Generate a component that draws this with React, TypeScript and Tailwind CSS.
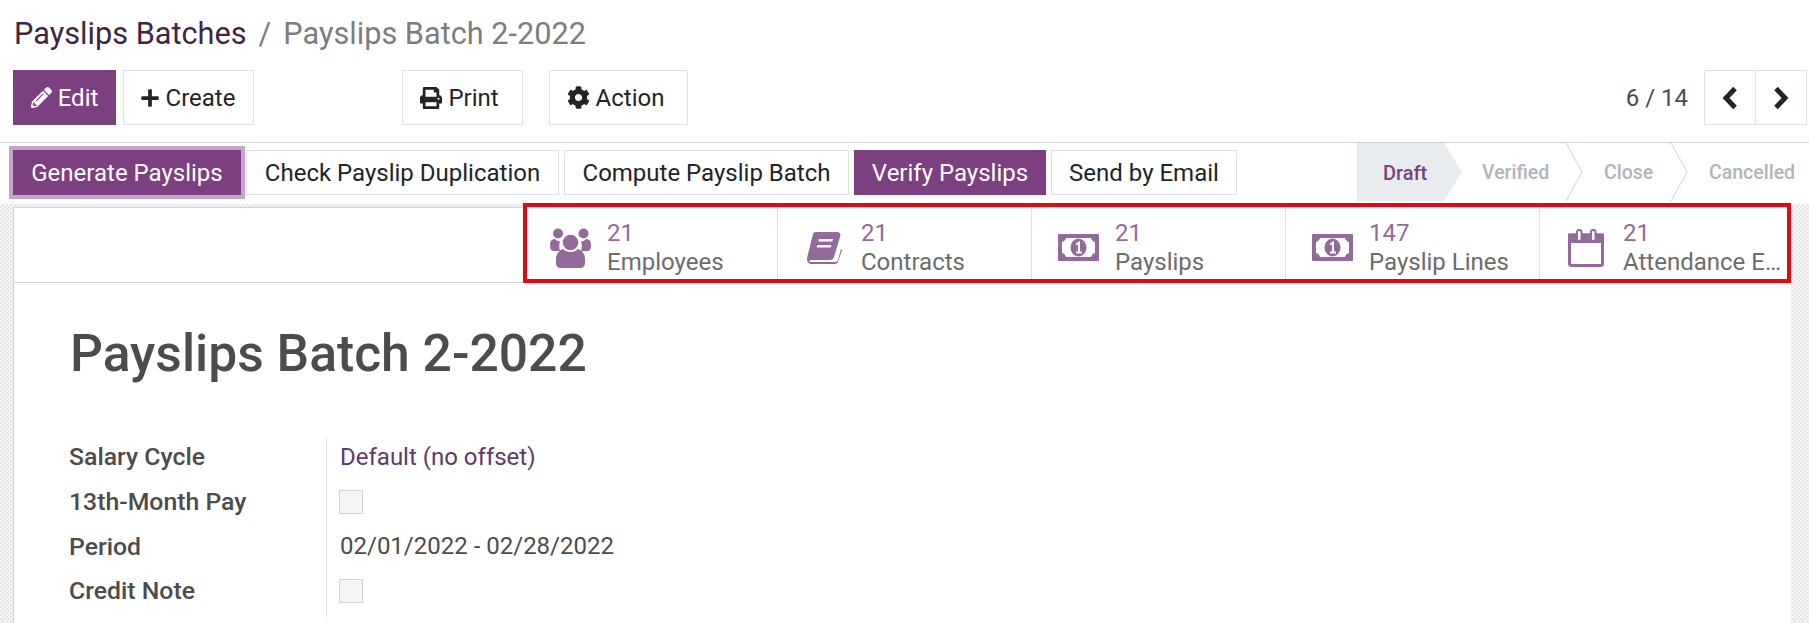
import { FaCog, FaPencilAlt, FaPlus, FaPrint } from "react-icons/fa";

function UsersIcon() {
  return (
    <svg width="41" height="40" viewBox="0 0 41 40" fill="#946a9c">
      <circle cx="8" cy="5.500" r="5" />
      <circle cx="33.500" cy="5.500" r="5" />
      <path d="M0 17c0-4 2-6 5-6 1 1.500 3 2.500 5 2.500-1 3-1 6 0 9.500H3c-2 0-3-3-3-6z" />
      <path d="M41 17c0-4-2-6-5-6-1 1.500-3 2.500-5 2.500 1 3 1 6 0 9.500h7c2 0 3-3 3-6z" />
      <circle cx="20.500" cy="14.500" r="8.500" stroke="#fff" strokeWidth="1.500" />
      <path d="M13 21c2 2 4.500 3 7.500 3s5.500-1 7.500-3c3 1 7 4 7 10v4c0 3-2 5-5 5H11c-3 0-5-2-5-5v-4c0-6 4-9 7-10z" />
    </svg>
  );
}

function BookIcon() {
  return (
    <svg width="35" height="32" viewBox="0 0 35 32" fill="#946a9c">
      <path d="M9 0h21c3 0 4 2 3 5l-6 20c-.6 2-2 3-4 3H5c-2 0-3 1-3 1.300C2 30 3 30 5 30h23c1.500 0 2.500-1 3-2l3-11 1 1-4 12c-.5 1.300-1.500 2-3 2H5c-3 0-5-2-5-5 0-1 .5-3 1-5L6 2c.4-1.200 1.500-2 3-2z" />
      <path d="M12 7h14l-.7 2.500h-14zM10.300 13h14l-.7 2.500h-14z" fill="#fff" />
    </svg>
  );
}

function MoneyIcon() {
  return (
    <svg width="41" height="27" viewBox="0 0 41 27">
      <rect width="41" height="27" rx="1" fill="#946a9c" />
      <path d="M8 4h25c.5 2 2 3.500 4 4v11c-2 .5-3.500 2-4 4H8c-.5-2-2-3.500-4-4V8c2-.5 3.500-2 4-4z" fill="#fff" />
      <ellipse cx="20.500" cy="13.500" rx="8" ry="9" fill="#946a9c" />
      <path d="M18 10.500l3-2v10M18 18.500h6" fill="none" stroke="#fff" strokeWidth="2" />
    </svg>
  );
}

function CalendarIcon() {
  return (
    <svg width="36" height="38" viewBox="0 0 36 38" fill="none" stroke="#946a9c">
      <rect x="1.500" y="6" width="33" height="30.500" rx="2" strokeWidth="3" />
      <rect x="1.500" y="6" width="33" height="6.500" fill="#946a9c" strokeWidth="3" />
      <rect x="9" y="1" width="4.500" height="11" rx="2" fill="#fff" strokeWidth="2" />
      <rect x="23" y="1" width="4.500" height="11" rx="2" fill="#fff" strokeWidth="2" />
    </svg>
  );
}

function Chevron() {
  return (
    <svg width="18" height="58" viewBox="0 0 18 58" fill="none" stroke="#ced4da" className="shrink-0">
      <path d="M1 0l16 29L1 58" />
    </svg>
  );
}

function PagerArrow({ points }: { points: string }) {
  return (
    <svg width="16" height="22" viewBox="0 0 16 22" fill="none" stroke="#212529" strokeWidth="5">
      <path d={points} />
    </svg>
  );
}

function ToolButton({ icon, label, width }: { icon: React.ReactNode; label: string; width: string }) {
  return (
    <button className={`flex h-[55px] items-center justify-center gap-[6px] border border-[#dee2e6] bg-white text-[#212529] ${width}`}>
      {icon}
      {label}
    </button>
  );
}

function ActionButton({ label, primary, width }: { label: string; primary?: boolean; width: string }) {
  return (
    <button
      className={`h-[45px] whitespace-nowrap ${width} ${
        primary ? "bg-[#7c3f80] text-white" : "border border-[#dee2e6] bg-white text-[#212529]"
      }`}
    >
      {label}
    </button>
  );
}

function Stat({ icon, value, label, className, iconClass }: { icon: React.ReactNode; value: string; label: string; className: string; iconClass: string }) {
  return (
    <div className={`flex h-full items-center pt-[9px] ${className}`}>
      <div className={`mr-[5px] flex w-[64px] shrink-0 justify-center ${iconClass}`}>{icon}</div>
      <div className="min-w-0 flex-1 pr-[1px] leading-[29px]">
        <div className="text-[#946a9c]">{value}</div>
        <div className="truncate text-[#6c6c6c]">{label}</div>
      </div>
    </div>
  );
}

function FieldRow({ label, children }: { label: string; children: React.ReactNode }) {
  return (
    <div className="flex h-[44.700px] items-center">
      <div className="w-[257px] shrink-0 pb-[7px] text-[24.800px] font-medium text-[#4c4c4c]">{label}</div>
      <div className="flex h-full items-center border-l border-[#dee2e6] pb-[7px] pl-[13px] text-[#4c4c4c]">{children}</div>
    </div>
  );
}

function Check() {
  return <div className="-ml-[1px] size-[24px] border border-[#ced4da] bg-[#f5f5f5]" />;
}

export default function App() {
  return (
    <div className="h-[623px] w-[1809px] overflow-hidden bg-white font-['Roboto',sans-serif] text-[24px]">
      {/* Control panel */}
      <header className="h-[143px] border-b border-[#ced4da]">
        <div className="flex h-[70px] items-start pl-[14px] pt-[16px] text-[30.700px] leading-[36px]">
          <span className="text-[#3f2543]">Payslips Batches</span>
          <span className="mx-[12px] text-[#7d7d7d]">/</span>
          <span className="text-[#7d7d7d]">Payslips Batch 2-2022</span>
        </div>
        <div className="flex items-center pl-[13px] pr-[2px]">
          <button className="flex h-[55px] w-[103px] items-center justify-center gap-[6px] bg-[#7c3f80] text-white">
            <FaPencilAlt size={21} />
            Edit
          </button>
          <div className="ml-[7px]">
            <ToolButton icon={<FaPlus size={20} />} label="Create" width="w-[131px] pr-[2px]" />
          </div>
          <div className="ml-[148px]">
            <ToolButton icon={<FaPrint size={22} />} label="Print" width="w-[121px] pr-[6px]" />
          </div>
          <div className="ml-[26px]">
            <ToolButton icon={<FaCog size={23} />} label="Action" width="w-[139px] pr-[6px]" />
          </div>
          <span className="ml-auto mr-[16px] text-[#4c4c4c]">6 / 14</span>
          <div className="flex h-[55px] w-[103px] border border-[#dee2e6]">
            <div className="flex flex-1 items-center justify-center border-r border-[#dee2e6]">
              <PagerArrow points="M13 1.500L4 11l9 9.500" />
            </div>
            <div className="flex flex-1 items-center justify-center">
              <PagerArrow points="M3 1.500L12 11l-9 9.500" />
            </div>
          </div>
        </div>
      </header>

      {/* Status bar */}
      <div className="flex h-[61px] items-start justify-between">
        <div className="flex gap-[5px] pl-[13px] pt-[7px]">
          <div className="outline-4 outline-[#c5a5c9]">
            <ActionButton primary label="Generate Payslips" width="block w-[228px]" />
          </div>
          <ActionButton label="Check Payslip Duplication" width="w-[313px]" />
          <ActionButton label="Compute Payslip Batch" width="w-[285px]" />
          <ActionButton primary label="Verify Payslips" width="w-[192px]" />
          <ActionButton label="Send by Email" width="w-[186px]" />
        </div>
        <div className="flex h-[58px] text-[19.500px] font-medium text-[#adb5bd]">
          <div className="flex w-[105px] items-center bg-[#e9ecef] pl-[26px] pt-[1px] text-[20px] text-[#7c3f80] [clip-path:polygon(0_0,87px_0,100%_50%,87px_100%,0_100%)]">
            Draft
          </div>
          <div className="flex w-[121px] items-center justify-between pl-[20px]">
            <span className="pt-[2px]">Verified</span>
            <Chevron />
          </div>
          <div className="flex w-[105px] items-center justify-between pl-[21px]">
            <span className="pt-[2px]">Close</span>
            <Chevron />
          </div>
          <div className="flex w-[121px] items-center pl-[21px] pt-[2px]">Cancelled</div>
        </div>
      </div>

      {/* Form sheet */}
      <div className="h-[419px] bg-[repeating-conic-gradient(#e6e6e6_0_25%,#f7f7f7_0_50%)] bg-[length:4px_4px] pl-[13px] pr-[18px] pt-[3px]">
        <div className="h-full border-l border-t border-[#ced4da] bg-white">
          <div className="flex h-[75px] justify-end border-b border-[#ced4da]">
            <div className="-mt-[5px] flex h-[80px] w-[1268px] items-center border-4 border-[#e00b12] bg-white">
              <Stat className="w-[251px] border-r border-[#dee2e6]" iconClass="ml-[11px]" icon={<UsersIcon />} value="21" label="Employees" />
              <Stat className="w-[254px] border-r border-[#dee2e6]" iconClass="ml-[14px]" icon={<BookIcon />} value="21" label="Contracts" />
              <Stat className="w-[254px] border-r border-[#dee2e6]" iconClass="ml-[14px]" icon={<MoneyIcon />} value="21" label="Payslips" />
              <Stat className="w-[254px] border-r border-[#dee2e6]" iconClass="ml-[14px]" icon={<MoneyIcon />} value="147" label="Payslip Lines" />
              <Stat className="w-[247px]" iconClass="ml-[14px]" icon={<CalendarIcon />} value="21" label="Attendance Entries" />
            </div>
          </div>
          <div className="pl-[55px]">
            <h1 className="ml-[1px] mt-[41px] text-[51.600px] font-medium leading-[60px] text-[#4c4c4c]">Payslips Batch 2-2022</h1>
            <div className="mt-[54px]">
              <FieldRow label="Salary Cycle">
                <span className="text-[#5f3a6c]">Default (no offset)</span>
              </FieldRow>
              <FieldRow label="13th-Month Pay">
                <Check />
              </FieldRow>
              <FieldRow label="Period">02/01/2022 - 02/28/2022</FieldRow>
              <FieldRow label="Credit Note">
                <Check />
              </FieldRow>
            </div>
          </div>
        </div>
      </div>
    </div>
  );
}
